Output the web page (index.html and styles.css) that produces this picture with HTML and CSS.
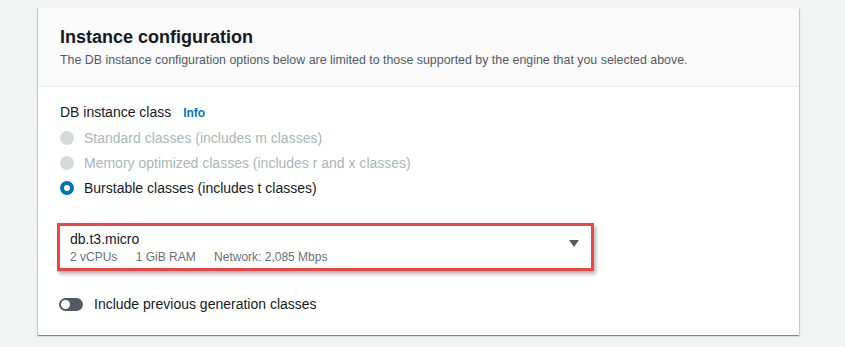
FILE: index.html
```html
<!DOCTYPE html>
<html>
<head>
  <title>Instance configuration</title>
  <link rel="stylesheet" href="styles.css">
</head>
<body>
  <div class="container">
    <div class="header">
      <h2>Instance configuration</h2>
      <p class="desc">The DB instance configuration options below are limited to those supported by the engine that you selected above.</p>
    </div>
    <div class="content">
      <div class="field-label">DB instance class <a class="info">Info</a></div>
      <div class="radio disabled"><span class="dot"></span>Standard classes (includes m classes)</div>
      <div class="radio disabled"><span class="dot"></span>Memory optimized classes (includes r and x classes)</div>
      <div class="radio"><span class="dot checked"></span>Burstable classes (includes t classes)</div>

      <div class="select">
        <div class="select-text">
          <div class="select-value">db.t3.micro</div>
          <div class="select-meta">
            <span>2 vCPUs</span>
            <span>1 GiB RAM</span>
            <span>Network: 2,085 Mbps</span>
          </div>
        </div>
        <svg class="caret" width="10" height="8" viewBox="0 0 10 8">
          <path d="M0 0 L10 0 L5 7 Z" fill="#545b64"/>
        </svg>
      </div>

      <div class="toggle-row">
        <span class="toggle"><span class="knob"></span></span>
        Include previous generation classes
      </div>
    </div>
  </div>
</body>
</html>
```

FILE: styles.css
```css
body {
  margin: 0;
  padding: 8px 46px 14px 38px;
  background-color: #f2f3f3;
  font-family: "Liberation Sans", Arial, sans-serif;
  color: #16191f;
}

.container {
  background-color: #ffffff;
  box-shadow: 0 1px 1px 0 rgba(0, 28, 36, 0.3), 1px 1px 1px 0 rgba(0, 28, 36, 0.15), -1px 1px 1px 0 rgba(0, 28, 36, 0.15);
}

.header {
  background-color: #fafafa;
  border-bottom: 1px solid #eaeded;
  padding: 18px 22px 18px 22px;
}

.header h2 {
  margin: 0;
  font-size: 18px;
  line-height: 22px;
  font-weight: bold;
}

.header .desc {
  margin: 4px 0 0 0;
  font-size: 12.4px;
  line-height: 16px;
  color: #545b64;
}

.content {
  padding: 15px 22px 21px 22px;
}

.field-label {
  font-size: 14px;
  line-height: 20px;
  margin-bottom: 2px;
}

.field-label .info {
  margin-left: 8px;
  font-size: 12px;
  font-weight: bold;
  color: #0073bb;
}

.radio {
  display: flex;
  align-items: center;
  height: 25px;
  font-size: 14px;
}

.radio.disabled {
  color: #aab7b8;
}

.radio .dot {
  width: 14px;
  height: 14px;
  border-radius: 50%;
  background-color: #d5dbdb;
  margin-right: 10px;
  box-sizing: border-box;
}

.radio .dot.checked {
  background-color: #ffffff;
  border: 4px solid #0073bb;
}

.select {
  display: flex;
  align-items: center;
  width: 537px;
  box-sizing: border-box;
  margin: 23px 0 0 -3px;
  padding: 3px 12px 3px 10px;
  border: 3px solid #ee4444;
  box-shadow: 2px 3px 4px rgba(0, 0, 0, 0.3);
}

.select-text {
  flex: 1;
}

.select-value {
  font-size: 14px;
  line-height: 20px;
}

.select-meta {
  font-size: 12px;
  line-height: 16px;
  color: #687078;
}

.select-meta span {
  margin-right: 15px;
}

.caret {
  margin-top: -6px;
}

.toggle-row {
  display: flex;
  align-items: center;
  margin-top: 23px;
  font-size: 14px;
  line-height: 20px;
}

.toggle {
  width: 24px;
  height: 13px;
  border-radius: 7px;
  background-color: #545b64;
  margin: 0 11px 0 -1px;
  position: relative;
}

.toggle .knob {
  position: absolute;
  top: 2px;
  left: 2px;
  width: 9px;
  height: 9px;
  border-radius: 50%;
  background-color: #ffffff;
}
```
